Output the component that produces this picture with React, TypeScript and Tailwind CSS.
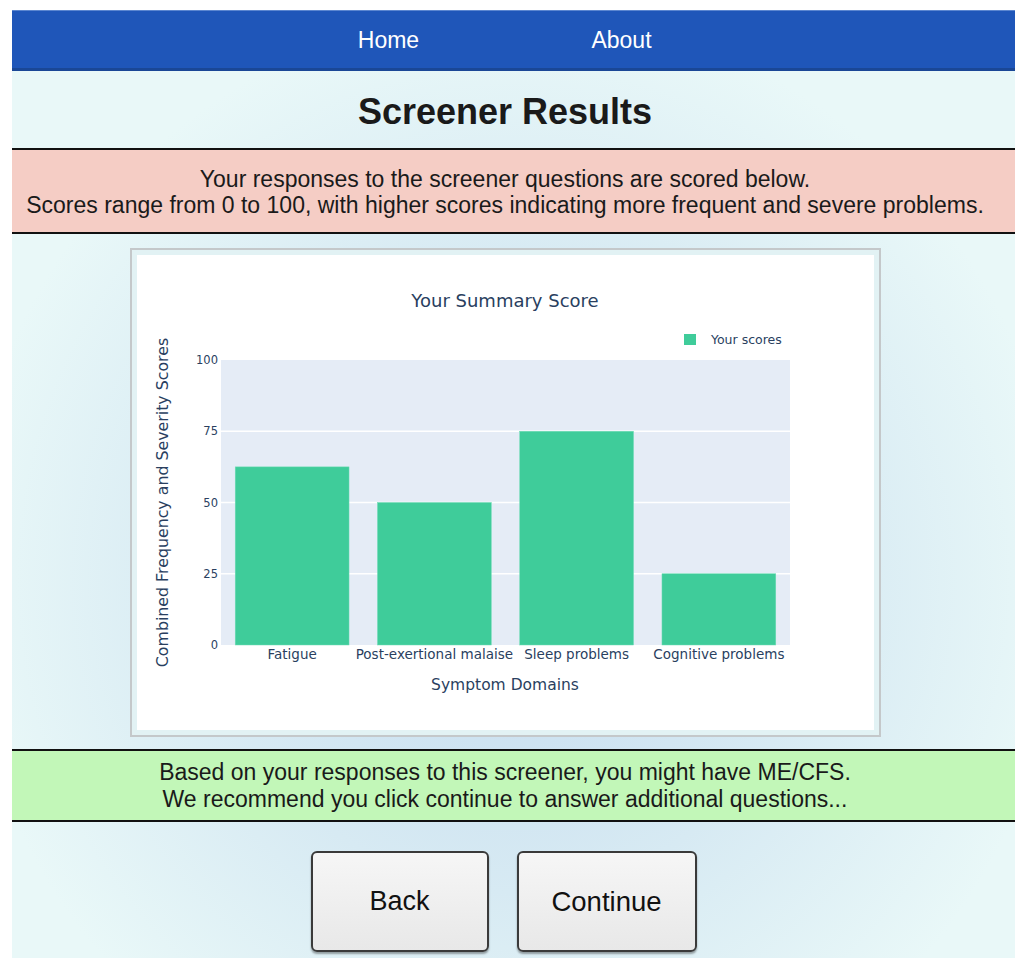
import React from "react";

const bars = [
  { label: "Fatigue", value: 62.5 },
  { label: "Post-exertional malaise", value: 50 },
  { label: "Sleep problems", value: 75 },
  { label: "Cognitive problems", value: 25 },
];

function SummaryChart() {
  const left = 84;
  const right = 653;
  const top = 105;
  const bottom = 390;
  const h = bottom - top;
  const step = (right - left) / bars.length;
  const barW = step * 0.8;
  const y = (v: number) => bottom - (v / 100) * h;
  const font = "'DejaVu Sans', Verdana, sans-serif";
  return (
    <svg width={737} height={475} viewBox="0 0 737 475" className="block">
      <text x={368} y={52} textAnchor="middle" fontSize={18} fill="#2a3f5f" fontFamily={font}>
        Your Summary Score
      </text>
      <rect x={547} y={79} width={12} height={11} fill="#3fcc9a" />
      <text x={574} y={89} fontSize={12.5} fill="#2a3f5f" fontFamily={font}>
        Your scores
      </text>
      <rect x={left} y={top} width={right - left} height={h} fill="#e5ecf6" />
      {[25, 50, 75].map((t) => (
        <line key={t} x1={left} x2={right} y1={y(t)} y2={y(t)} stroke="#ffffff" strokeWidth={1.5} />
      ))}
      {[0, 25, 50, 75, 100].map((t) => (
        <text key={t} x={81} y={y(t) + 4} textAnchor="end" fontSize={11.5} fill="#2a3f5f" fontFamily={font}>
          {t}
        </text>
      ))}
      {bars.map((b, i) => {
        const x = left + step * i + (step - barW) / 2;
        return (
          <g key={b.label}>
            <rect x={x} y={y(b.value)} width={barW} height={bottom - y(b.value)} fill="#3fcc9a" stroke="#6fdcb5" strokeWidth={0.5} />
            <text x={left + step * i + step / 2} y={404} textAnchor="middle" fontSize={13.5} fill="#2a3f5f" fontFamily={font}>
              {b.label}
            </text>
          </g>
        );
      })}
      <text x={368} y={435} textAnchor="middle" fontSize={15.5} fill="#2a3f5f" fontFamily={font}>
        Symptom Domains
      </text>
      <text
        x={0}
        y={0}
        transform={`translate(31 ${(top + bottom) / 2}) rotate(-90)`}
        textAnchor="middle"
        fontSize={15.8}
        fill="#2a3f5f"
        fontFamily={font}
      >
        Combined Frequency and Severity Scores
      </text>
    </svg>
  );
}

export default function App() {
  return (
    <div className="min-h-[958px] bg-white pl-[12px] pt-[10px] font-['Liberation_Sans',Arial,sans-serif]">
      <div className="flex min-h-[948px] flex-col bg-[radial-gradient(ellipse_55%_60%_at_50%_60%,#c4dbef_0%,#d7eaf3_55%,#e9f8f8_100%)]">
        <nav className="flex h-[61px] items-center justify-center border-b-[3px] border-[#1a4796] bg-[#1f56b9] pr-[17px] pt-[2px] shadow-[inset_0_1px_0_#5b86d0]">
          <a className="w-[233px] text-center text-[23px] text-white">Home</a>
          <a className="w-[233px] text-center text-[23px] text-white">About</a>
        </nav>
        <h1 className="flex h-[77px] items-center justify-center pr-[17px] pt-[5px] text-[36px] font-bold text-[#1a1a1a]">
          Screener Results
        </h1>
        <div className="border-y-2 border-[#111] bg-[#f5cdc5] pr-[17px] pt-[16px] pb-[14px] text-center text-[23px] leading-[26px] text-[#1a1a1a]">
          <p>Your responses to the screener questions are scored below.</p>
          <p>Scores range from 0 to 100, with higher scores indicating more frequent and severe problems.</p>
        </div>
        <div className="flex justify-center pr-[17px] pt-[14px] pb-[12px]">
          <div className="border-2 border-[#c4c8ca] bg-[#e2f2f4] p-[5px]">
            <div className="bg-white">
              <SummaryChart />
            </div>
          </div>
        </div>
        <div className="border-y-2 border-[#111] bg-[#c2f7b8] pr-[17px] pt-[8px] pb-[7px] text-center text-[23px] leading-[27px] text-[#1a1a1a]">
          <p>Based on your responses to this screener, you might have ME/CFS.</p>
          <p>We recommend you click continue to answer additional questions...</p>
        </div>
        <div className="flex justify-center gap-[28px] pr-[20px] pt-[29px]">
          <button className="h-[101px] w-[178px] rounded-[6px] border-2 border-[#3a3a3a] bg-[linear-gradient(#f6f6f6,#e8e8e8)] text-[27px] text-[#111] shadow-[0_2px_2px_rgba(0,0,0,0.35)]">
            Back
          </button>
          <button className="h-[101px] w-[180px] rounded-[6px] border-2 border-[#3a3a3a] bg-[linear-gradient(#f6f6f6,#e8e8e8)] text-[27.5px] text-[#111] shadow-[0_2px_2px_rgba(0,0,0,0.35)]">
            Continue
          </button>
        </div>
      </div>
    </div>
  );
}
